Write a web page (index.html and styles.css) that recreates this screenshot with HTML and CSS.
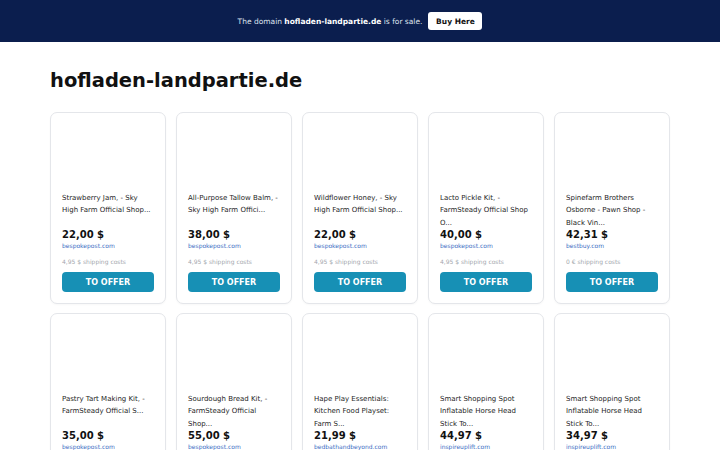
FILE: index.html
```html
<!DOCTYPE html>
<html lang="en">
<head>
<meta charset="utf-8">
<title>hofladen-landpartie.de</title>
<link rel="stylesheet" href="styles.css">
</head>
<body>
<header class="topbar">
  <span class="topbar-text">The domain <b>hofladen-landpartie.de</b> is for sale.</span>
  <a class="buy-btn" href="#">Buy Here</a>
</header>
<main class="main">
  <h1 class="site-title">hofladen-landpartie.de</h1>
  <div class="grid">
    <div class="card"><div class="card-img"></div><div class="card-title">Strawberry Jam, - Sky High Farm Official Shop...</div><div class="price">22,00 $</div><div class="shop">bespokepost.com</div><div class="ship">4,95 $ shipping costs</div><a class="offer" href="#">TO OFFER</a></div>
    <div class="card"><div class="card-img"></div><div class="card-title">All-Purpose Tallow Balm, - Sky High Farm Offici...</div><div class="price">38,00 $</div><div class="shop">bespokepost.com</div><div class="ship">4,95 $ shipping costs</div><a class="offer" href="#">TO OFFER</a></div>
    <div class="card"><div class="card-img"></div><div class="card-title">Wildflower Honey, - Sky High Farm Official Shop...</div><div class="price">22,00 $</div><div class="shop">bespokepost.com</div><div class="ship">4,95 $ shipping costs</div><a class="offer" href="#">TO OFFER</a></div>
    <div class="card"><div class="card-img"></div><div class="card-title">Lacto Pickle Kit, - FarmSteady Official Shop O...</div><div class="price">40,00 $</div><div class="shop">bespokepost.com</div><div class="ship">4,95 $ shipping costs</div><a class="offer" href="#">TO OFFER</a></div>
    <div class="card"><div class="card-img"></div><div class="card-title">Spinefarm Brothers Osborne - Pawn Shop - Black Vin...</div><div class="price">42,31 $</div><div class="shop">bestbuy.com</div><div class="ship">0 € shipping costs</div><a class="offer" href="#">TO OFFER</a></div>
    <div class="card"><div class="card-img"></div><div class="card-title">Pastry Tart Making Kit, - FarmSteady Official S...</div><div class="price">35,00 $</div><div class="shop">bespokepost.com</div><div class="ship">4,95 $ shipping costs</div><a class="offer" href="#">TO OFFER</a></div>
    <div class="card"><div class="card-img"></div><div class="card-title">Sourdough Bread Kit, - FarmSteady Official Shop...</div><div class="price">55,00 $</div><div class="shop">bespokepost.com</div><div class="ship">4,95 $ shipping costs</div><a class="offer" href="#">TO OFFER</a></div>
    <div class="card"><div class="card-img"></div><div class="card-title">Hape Play Essentials: Kitchen Food Playset: Farm S...</div><div class="price">21,99 $</div><div class="shop">bedbathandbeyond.com</div><div class="ship">0 € shipping costs</div><a class="offer" href="#">TO OFFER</a></div>
    <div class="card"><div class="card-img"></div><div class="card-title">Smart Shopping Spot Inflatable Horse Head Stick To...</div><div class="price">44,97 $</div><div class="shop">inspireuplift.com</div><div class="ship">0 € shipping costs</div><a class="offer" href="#">TO OFFER</a></div>
    <div class="card"><div class="card-img"></div><div class="card-title">Smart Shopping Spot Inflatable Horse Head Stick To...</div><div class="price">34,97 $</div><div class="shop">inspireuplift.com</div><div class="ship">0 € shipping costs</div><a class="offer" href="#">TO OFFER</a></div>
  </div>
</main>
</body>
</html>
```

FILE: styles.css
```css
* { box-sizing: border-box; }
html, body { margin: 0; padding: 0; background: #ffffff; }
body { font-family: "DejaVu Sans", Verdana, sans-serif; color: #111; }

.topbar {
  height: 42px;
  background: #0b1e4e;
  display: flex;
  align-items: center;
  justify-content: center;
  gap: 6px;
  color: #dfe4ee;
  font-size: 7.5px;
}
.topbar-text b { color: #ffffff; font-weight: bold; }
.buy-btn {
  display: inline-flex;
  align-items: center;
  justify-content: center;
  width: 54px;
  height: 18px;
  background: #ffffff;
  color: #111;
  font-weight: bold;
  font-size: 7.5px;
  border-radius: 3px;
  text-decoration: none;
}

.main {
  max-width: 620px;
  margin: 0 auto;
  padding-top: 27px;
}
.site-title {
  margin: 0 0 19px 0;
  font-size: 19.5px;
  line-height: 24px;
  font-weight: bold;
  color: #111;
}

.grid {
  display: grid;
  grid-template-columns: repeat(5, 1fr);
  column-gap: 10px;
  row-gap: 9px;
}
.card {
  border: 1px solid #e4e6ea;
  border-radius: 7px;
  padding: 11px;
  display: flex;
  flex-direction: column;
  background: #fff;
  box-shadow: 0 1px 2px rgba(0,0,0,0.03);
}
.card-img { height: 68px; }
.card-title {
  font-size: 7px;
  line-height: 12.3px;
  height: 37px;
  color: #1e1e1e;
}
.price {
  font-size: 10px;
  line-height: 12px;
  font-weight: bold;
  color: #111;
}
.shop {
  font-size: 6px;
  line-height: 10px;
  color: #3d6ec4;
}
.ship {
  font-size: 6px;
  line-height: 10px;
  margin-top: 6px;
  color: #a4a8ae;
}
.offer {
  margin-top: 5px;
  height: 20px;
  border-radius: 4px;
  background: #1790b5;
  color: #fff;
  font-weight: bold;
  font-size: 8px;
  display: flex;
  align-items: center;
  justify-content: center;
  text-decoration: none;
}
```
